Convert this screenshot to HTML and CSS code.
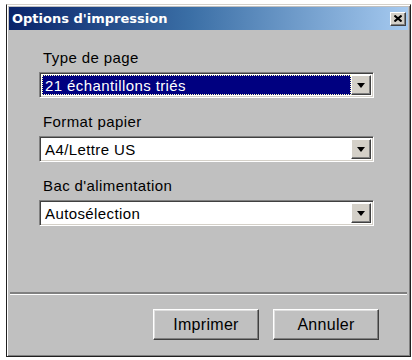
FILE: index.html
```html
<!DOCTYPE html>
<html lang="fr">
<head>
<meta charset="utf-8">
<title>Options d'impression</title>
<link rel="stylesheet" href="styles.css">
</head>
<body>
  <div class="dialog">
    <div class="titlebar">
      <span class="title">Options d'impression</span>
      <span class="close-btn">
        <svg width="8" height="7" viewBox="0 0 8 7">
          <path d="M0.5 0.5 L7.5 6.5 M7.5 0.5 L0.5 6.5" stroke="#000" stroke-width="2" fill="none"/>
        </svg>
      </span>
    </div>

    <div class="content">
      <!-- Type de page -->
      <div class="field">
        <div class="label">Type de page</div>
        <div class="select">
          <div class="value selected"><span>21 échantillons triés</span></div>
          <div class="arrow"><span class="tri"></span></div>
        </div>
      </div>
      <!-- Format papier -->
      <div class="field">
        <div class="label">Format papier</div>
        <div class="select">
          <div class="value"><span>A4/Lettre US</span></div>
          <div class="arrow"><span class="tri"></span></div>
        </div>
      </div>
      <!-- Bac d'alimentation -->
      <div class="field">
        <div class="label">Bac d'alimentation</div>
        <div class="select">
          <div class="value"><span>Autosélection</span></div>
          <div class="arrow"><span class="tri"></span></div>
        </div>
      </div>
    </div>

    <div class="separator"></div>

    <div class="footer">
      <div class="button">Imprimer</div>
      <div class="button">Annuler</div>
    </div>
  </div>
</body>
</html>
```

FILE: styles.css
```css
body {
  margin: 0;
  padding: 0;
  background-color: #ffffff;
  font-family: "Liberation Sans", Arial, sans-serif;
}

.dialog {
  box-sizing: border-box;
  width: 405px;
  height: 353px;
  margin: 4px 0 0 6px;
  padding: 2px;
  background-color: #c0c0c0;
  border: 1px solid #202020;
  border-top-color: #d4d0c8;
  box-shadow: inset 1px 1px #ffffff, inset -1px -1px #808080;
  display: flex;
  flex-direction: column;
}

.titlebar {
  height: 23px;
  display: flex;
  align-items: center;
  justify-content: space-between;
  padding: 0 2px 0 3px;
  background: linear-gradient(to right, #0a246a 0%, #3a6ea5 45%, #a6caf0 100%);
}

.title {
  font-family: "DejaVu Sans", Verdana, sans-serif;
  font-weight: bold;
  font-size: 13px;
  color: #ffffff;
}

.close-btn {
  box-sizing: border-box;
  width: 16px;
  height: 14px;
  display: flex;
  align-items: center;
  justify-content: center;
  background-color: #d4d0c8;
  border: 1px solid;
  border-color: #ffffff #404040 #404040 #ffffff;
  box-shadow: inset -1px -1px #808080;
}

.content {
  flex: 1;
  padding: 19px 34px 0 30px;
  display: flex;
  flex-direction: column;
  gap: 15px;
}

.label {
  font-size: 15px;
  letter-spacing: 0.4px;
  line-height: 17px;
  color: #000000;
  padding-left: 4px;
  margin-bottom: 6px;
}

.select {
  box-sizing: border-box;
  height: 26px;
  display: flex;
  border: 1px solid;
  border-color: #808080 #ffffff #ffffff #808080;
  box-shadow: inset 1px 1px #404040, inset -1px -1px #d4d0c8;
  padding: 2px;
  background-color: #ffffff;
}

.value {
  flex: 1;
  display: flex;
  align-items: center;
  font-size: 15px;
  letter-spacing: 0.4px;
  color: #000000;
  padding-left: 2px;
  border: 1px solid transparent;
}

.value.selected {
  background-color: #000080;
  color: #ffffff;
  border: 1px dotted #ffffc0;
}

.arrow {
  box-sizing: border-box;
  width: 20px;
  display: flex;
  align-items: center;
  justify-content: center;
  background-color: #d4d0c8;
  border: 1px solid;
  border-color: #ffffff #404040 #404040 #ffffff;
  box-shadow: inset -1px -1px #808080;
}

.tri {
  width: 0;
  height: 0;
  border-left: 4px solid transparent;
  border-right: 4px solid transparent;
  border-top: 5px solid #000000;
}

.separator {
  box-sizing: border-box;
  height: 3px;
  margin: 0 1px;
  border-top: 2px solid #808080;
  border-bottom: 1px solid #ffffff;
}

.footer {
  height: 59px;
  box-sizing: border-box;
  padding: 14px 29px 0 0;
  display: flex;
  justify-content: flex-end;
  gap: 14px;
}

.button {
  box-sizing: border-box;
  width: 106px;
  height: 31px;
  display: flex;
  align-items: center;
  justify-content: center;
  font-size: 16px;
  letter-spacing: 0.3px;
  color: #000000;
  background-color: #c0c0c0;
  border: 1px solid;
  border-color: #ffffff #404040 #404040 #ffffff;
  box-shadow: inset -1px -1px #808080, inset 1px 1px #dfdfdf;
}
```
